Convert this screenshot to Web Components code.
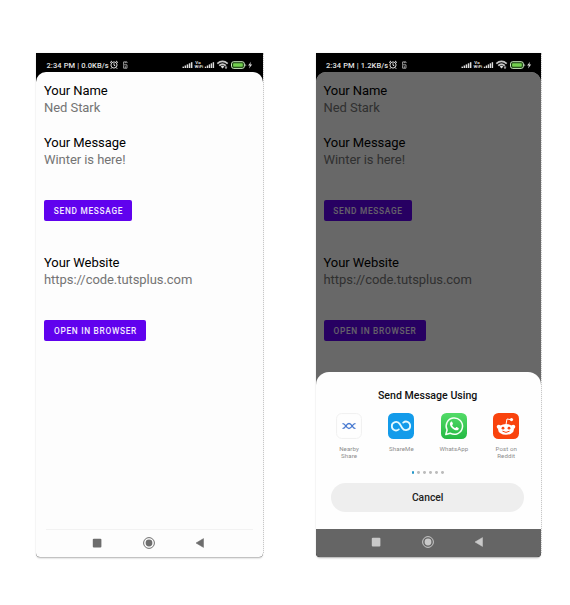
<!DOCTYPE html>
<html lang="en">
<head>
<meta charset="utf-8">
<title>Share intents</title>
<style>
body{margin:0;width:570px;height:605px;background:#fff;overflow:hidden;font-family:Roboto,"Liberation Sans",sans-serif}
</style>
</head>
<body>
<demo-stage>
  <phone-frame>
    <status-bar slot="status" speed="0.0KB/s"></status-bar>
    <intent-form></intent-form>
    <nav-bar slot="nav"></nav-bar>
  </phone-frame>
  <phone-frame dimmed>
    <status-bar slot="status" speed="1.2KB/s"></status-bar>
    <intent-form></intent-form>
    <share-sheet slot="sheet">
      <share-target slot="targets" icon="nearby">Nearby<br>Share</share-target>
      <share-target slot="targets" icon="shareme">ShareMe</share-target>
      <share-target slot="targets" icon="whatsapp">WhatsApp</share-target>
      <share-target slot="targets" icon="reddit">Post on<br>Reddit</share-target>
    </share-sheet>
    <nav-bar slot="nav" dark></nav-bar>
  </phone-frame>
</demo-stage>
<script>
const define = (name, render) => customElements.define(name, class extends HTMLElement {
  connectedCallback() {
    if (this.shadowRoot) return;
    const t = document.createElement('template');
    t.innerHTML = render(this);
    this.attachShadow({mode: 'open'}).append(t.content.cloneNode(true));
  }
});

define('demo-stage', () => `
<style>:host{display:flex;gap:53px;padding:53px 0 0 36px;box-sizing:border-box;width:570px;height:605px}</style>
<slot></slot>`);

define('phone-frame', el => {
  const dim = el.hasAttribute('dimmed');
  return `
<style>
:host{display:grid;grid-template-rows:19px 1fr 28px;width:${dim ? 225.5 : 226.5}px;height:${dim ? 503.5 : 504}px;flex:none;border-radius:0 0 4px 4px;
 box-shadow:0 2px 2px -1px rgba(0,0,0,.3),0 0 2px rgba(0,0,0,.1);position:relative;background:#000}
:host::after{content:"";position:absolute;top:0;bottom:4px;left:100%;border-right:1px dotted #c8c8c8}
.body{position:relative;background:#fdfdfd;border-radius:10px 10px 0 0;overflow:hidden;min-height:0}
.dim{position:absolute;inset:0;background:rgba(0,0,0,.59)}
.sheet{position:absolute;left:0;right:0;bottom:0}
</style>
<slot name="status"></slot>
<div class="body"><slot></slot>${dim ? '<div class="dim"></div><div class="sheet"><slot name="sheet"></slot></div>' : ''}</div>
<slot name="nav"></slot>`;
});

define('status-bar', el => {
  const bars = x => [0,1,2,3,4].map(i => `<rect x="${x + i * 2.1}" y="${13.6 - i * 1.1}" width="1.5" height="${1.4 + i * 1.1}"/>`).join('');
  return `
<style>
:host{display:flex;align-items:center;justify-content:space-between;background:#000;color:#e4e4e4;height:19px;font-size:7.5px;line-height:9px}
.l{display:flex;align-items:center;padding:5px 0 0 10.5px;white-space:pre}
.l span{letter-spacing:.11px;font-weight:500}
svg{display:block}
</style>
<div class="l"><span>2:34 PM | ${el.getAttribute('speed')}</span>
<svg width="20" height="10" viewBox="0 0 20 10" fill="none" stroke="#ddd" stroke-width="1"><circle cx="5" cy="5" r="3.1"/><path d="M5 3.2V5.2L6.4 6M1 2.7L3 .9M7 .9L9 2.7M2.6 7.8l-.8 1M7.4 7.8l.8 1"/><path stroke="#aaa" stroke-width=".9" d="M18 3.1V1.9H14.6V4.8H18V8.2H14.6V5.2M16.3 1.9V3.2M16.3 6.2V8.2"/></svg></div>
<svg width="80.5" height="19" viewBox="0 0 80.5 19" fill="#ddd">
<g>${bars(.5)}</g>
<g font-family="Roboto,Liberation Sans,sans-serif" font-weight="700"><text x="13.2" y="11" font-size="4.4" textLength="5.5">Vo</text><text x="12.6" y="15" font-size="4.2" textLength="8.7" lengthAdjust="spacingAndGlyphs">WiFi</text></g>
<g transform="translate(22.8 0) scale(.94 1)">${bars(0)}</g>
<g fill="none" stroke="#c4c4c4" stroke-width="1.8"><path d="M35.3 10.6Q40.5 6.2 45.7 10.6M37.2 12.6Q40.5 9.8 43.8 12.6"/></g><path d="M38.7 13.4L40.5 15.6L42.4 13.4Q40.5 11.9 38.7 13.4Z"/>
<path d="M44 12.8v2.6m-1.2-1.1L44 15.4l1.2-1.1" fill="none" stroke="#ddd" stroke-width=".8"/>
<rect x="49.5" y="8.7" width="12.9" height="6.7" rx="2.2" fill="#163d0d" stroke="#c8e8bd" stroke-width="1"/><rect x="51.1" y="10.3" width="9.7" height="3.5" rx=".7" fill="#72d04e"/><path d="M63.5 10.7Q65.1 12.1 63.5 13.5Z"/>
<path d="M69 8.8L66.1 12.6H67.9L67 15.6L70.2 11.4H68.3Z"/></svg>`;
});

define('intent-form', () => `
<style>:host{display:flex;flex-direction:column;padding:9.5px 8px 0}
.gap{margin-top:17px}.mid{margin-top:32.5px}.btn{margin-top:31.5px}</style>
<form-field label="Your Name">Ned Stark</form-field>
<form-field class="gap" label="Your Message">Winter is here!</form-field>
<action-button class="btn" style="--w:88px">SEND MESSAGE</action-button>
<form-field class="mid" label="Your Website">https://code.tutsplus.com</form-field>
<action-button class="btn" style="--w:102px">OPEN IN BROWSER</action-button>`);

define('form-field', el => `
<style>:host{display:block;font-size:13px;line-height:17.5px;letter-spacing:-.06px;color:#747474;white-space:nowrap}
.label{color:#000}</style>
<div class="label">${el.getAttribute('label')}</div><div><slot></slot></div>`);

define('action-button', () => `
<style>:host{display:flex;align-items:center;justify-content:center;width:var(--w);height:21px;border-radius:2px;background:#6002ee;
color:#f4eaff;font-size:8.3px;font-weight:500;letter-spacing:.71px;box-sizing:border-box;padding-left:1px;white-space:nowrap}</style><slot></slot>`);

define('share-sheet', () => `
<style>
:host{display:flex;flex-direction:column;align-items:center;height:157px;background:#fefefe;border-radius:13px 13px 0 0;box-sizing:border-box;padding:17px 1.2px 0 0}
h2{margin:0;font-size:10.6px;line-height:14px;font-weight:500;color:#111;letter-spacing:0;white-space:nowrap}
.row{display:grid;grid-template-columns:repeat(4,52.4px);height:46px;margin-top:10.5px}
.dots{display:flex;gap:3.1px;margin-top:12px;height:3px;align-items:center}
.dots i{width:2.8px;height:2.8px;border-radius:50%;background:#bcbcbc}.dots i:first-child{background:#2597c9}
button{margin:8.5px 0 0;border:0;padding:0;width:193px;height:29.5px;border-radius:15px;background:#eee;color:#222;font:500 10.3px Roboto,"Liberation Sans",sans-serif}
</style>
<h2>Send Message Using</h2>
<div class="row"><slot name="targets"></slot></div>
<div class="dots"><i></i><i></i><i></i><i></i><i></i><i></i></div>
<button>Cancel</button>`);

const icons = {
  nearby: `<rect x=".6" y=".6" width="24.8" height="24.8" rx="5" fill="#fefefe" stroke="#f0f0f0" stroke-width="1"/><g fill="none" stroke="#4779d0" stroke-width="1.3" stroke-linecap="round"><path d="M7 10.7C9.6 10.7 10 15.5 13 15.5S16.4 10.7 19 10.7M7 15.3C9.6 15.3 10 10.5 13 10.5S16.4 15.3 19 15.3"/></g>`,
  shareme: `<rect width="26" height="26" rx="5.5" fill="#139bea"/><path d="M10.8 16.4C7.8 18.9 3.8 16.7 3.8 13C3.8 8.8 9.6 7.3 11.8 11L14.2 15C16.4 18.7 22.2 17.2 22.2 13C22.2 9.3 18.2 7.1 15.2 9.6" fill="none" stroke="#e4faff" stroke-width="1.8" stroke-linecap="round"/>`,
  whatsapp: `<defs><linearGradient id="g" x2="0" y2="1"><stop stop-color="#53db68"/><stop offset="1" stop-color="#24b943"/></linearGradient></defs><rect width="26" height="26" rx="5.5" fill="url(#g)"/><path d="M4.8 21.5L6.1 17A8.2 8.2 0 1 1 9.2 20.2Z" fill="none" stroke="#f5fff5" stroke-width="1.5" stroke-linejoin="round"/><path d="M9.5 9.2C10 8.4 10.9 8.2 11.2 8.9L12 10.8C12.1 11.3 11.4 11.8 11.1 12.2C11.8 13.6 12.8 14.5 14.3 15.1C14.8 14.7 15.2 13.9 15.7 14.1L17.5 15C18.1 15.4 17.6 16.4 17 16.9C15.5 18 12.8 16.7 11.2 15.2C9.6 13.6 8 11 9.5 9.2Z" fill="#fff"/>`,
  reddit: `<rect width="26" height="26" rx="5.5" fill="#f9430d"/><g fill="#fff"><circle cx="5.8" cy="13.8" r="2.1"/><circle cx="20.2" cy="13.8" r="2.1"/><ellipse cx="13" cy="16.4" rx="7.9" ry="5.4"/><circle cx="18.5" cy="6.6" r="1.6"/></g><path d="M13 11.5L14 6L17.6 6.6" fill="none" stroke="#fff" stroke-width="1"/><circle cx="10" cy="15.2" r="1.4" fill="#f9430d"/><circle cx="16" cy="15.2" r="1.4" fill="#f9430d"/><path d="M9.8 18.4Q13 20.6 16.2 18.4" fill="none" stroke="#f9430d" stroke-width="1" stroke-linecap="round"/>`
};
define('share-target', el => `
<style>:host{display:flex;flex-direction:column;align-items:center;text-align:center;color:#8c8c8c;font-size:6.1px;line-height:7.2px;letter-spacing:.1px}
svg{display:block;margin-bottom:6px}</style>
<svg width="26" height="26" viewBox="0 0 26 26">${icons[el.getAttribute('icon')]}</svg><div><slot></slot></div>`);

define('nav-bar', el => {
  const dark = el.hasAttribute('dark'), c = dark ? '#c9c9c9' : '#6d6d6d';
  return `
<style>:host{display:flex;justify-content:center;background:${dark ? '#656565' : '#fdfdfd'};border-radius:0 0 4px 4px}
div{flex:1;margin:0 10px;border-top:1px solid ${dark ? 'transparent' : '#f2f2f2'};display:flex;justify-content:center;gap:39.5px;padding:${dark ? 6.5 : 7}px 1px 0 0;box-sizing:border-box}
svg{display:block;width:12px;height:12px}</style>
<div>
<svg viewBox="0 0 12 12"><rect x="1.8" y="1.8" width="8.6" height="8.6" rx="1" fill="${c}"/></svg>
<svg viewBox="0 0 12 12"><circle cx="6" cy="6" r="5.4" fill="none" stroke="${c}" stroke-width="1"/><circle cx="6" cy="6" r="3.4" fill="${c}"/></svg>
<svg viewBox="0 0 12 12"><path d="M2 6L9.5 1.6V10.4Z" fill="${c}" stroke="${c}" stroke-width=".5" stroke-linejoin="round"/></svg>
</div>`;
});
</script>
</body>
</html>
